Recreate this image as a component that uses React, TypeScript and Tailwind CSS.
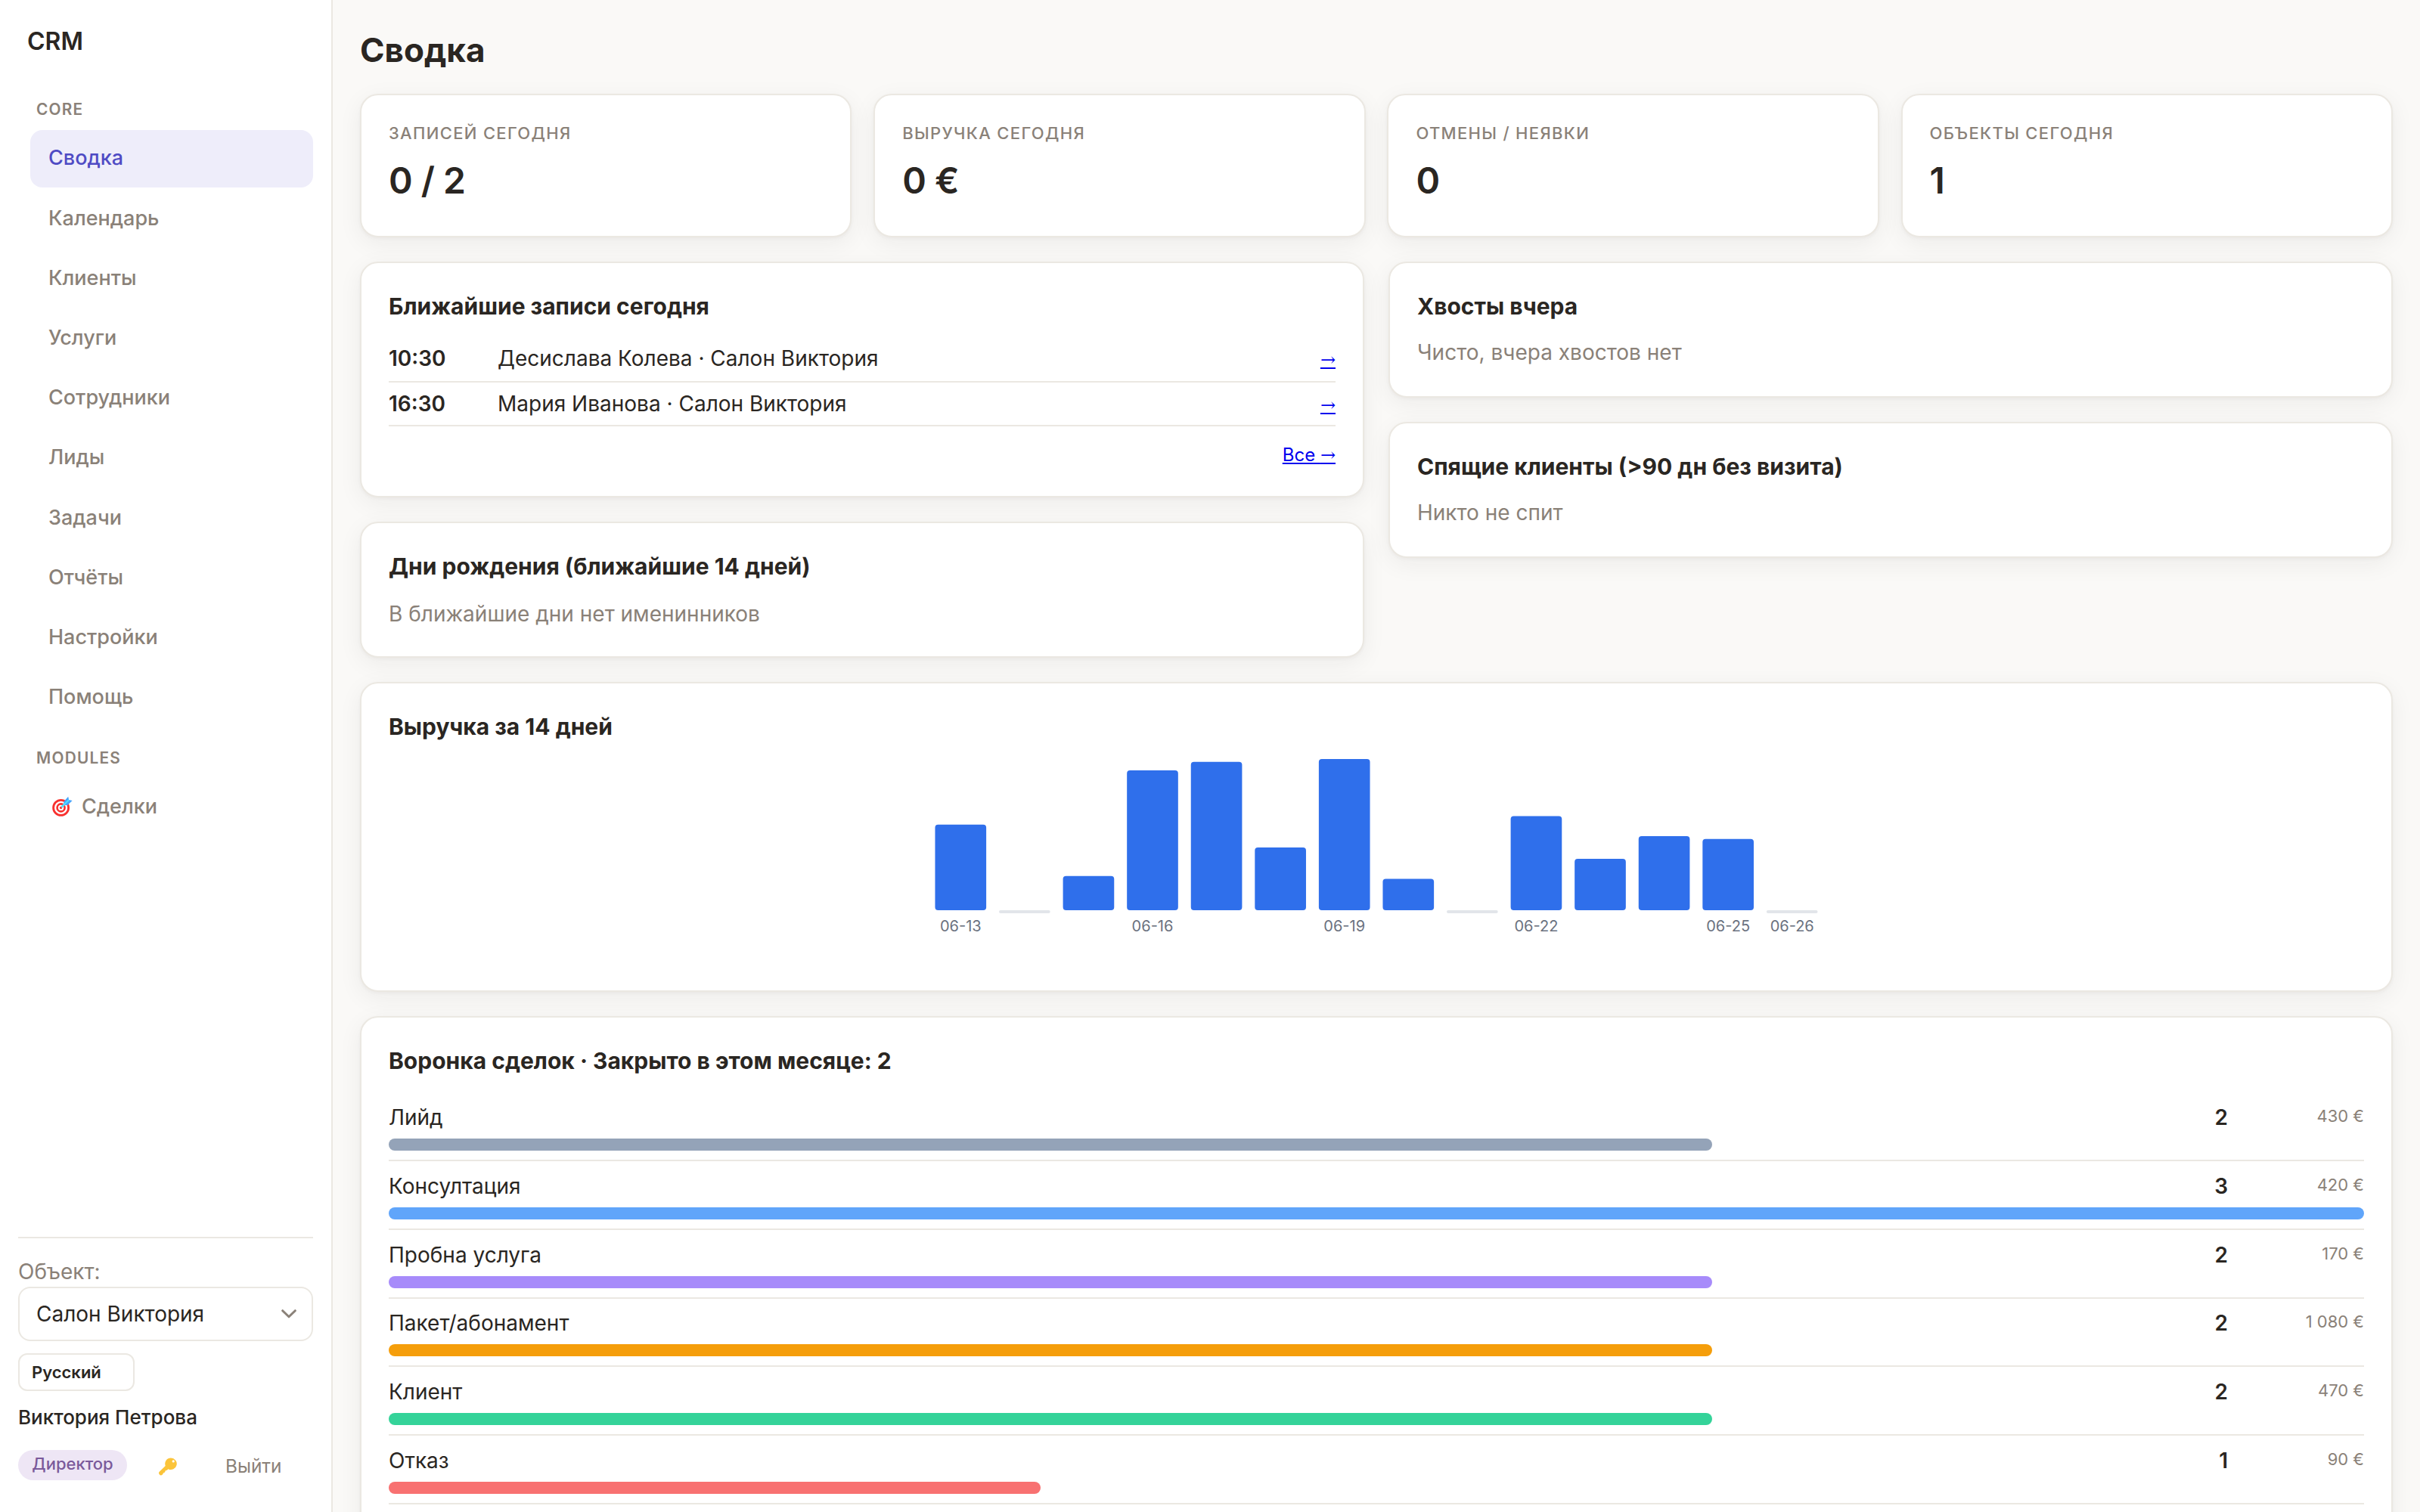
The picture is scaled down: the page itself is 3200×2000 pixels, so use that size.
import clsx from "clsx";
import type { ReactNode } from "react";

const NAV = [
  "Сводка",
  "Календарь",
  "Клиенты",
  "Услуги",
  "Сотрудники",
  "Лиды",
  "Задачи",
  "Отчёты",
  "Настройки",
  "Помощь",
];

const KPIS = [
  { label: "Записей сегодня", value: "0 / 2" },
  { label: "Выручка сегодня", value: "0 €" },
  { label: "Отмены / неявки", value: "0" },
  { label: "Объекты сегодня", value: "1" },
];

const UPCOMING = [
  { time: "10:30", text: "Десислава Колева · Салон Виктория" },
  { time: "16:30", text: "Мария Иванова · Салон Виктория" },
];

const REVENUE = [
  { day: "06-13", value: 300 },
  { day: "06-14", value: 0 },
  { day: "06-15", value: 120 },
  { day: "06-16", value: 490 },
  { day: "06-17", value: 520 },
  { day: "06-18", value: 220 },
  { day: "06-19", value: 530 },
  { day: "06-20", value: 110 },
  { day: "06-21", value: 0 },
  { day: "06-22", value: 330 },
  { day: "06-23", value: 180 },
  { day: "06-24", value: 260 },
  { day: "06-25", value: 250 },
  { day: "06-26", value: 0 },
];

const FUNNEL = [
  { name: "Лийд", count: 2, amount: "430 €", pct: 67, color: "bg-[#94a3b8]" },
  { name: "Консултация", count: 3, amount: "420 €", pct: 100, color: "bg-[#60a5fa]" },
  { name: "Пробна услуга", count: 2, amount: "170 €", pct: 67, color: "bg-[#a78bfa]" },
  { name: "Пакет/абонамент", count: 2, amount: "1 080 €", pct: 67, color: "bg-[#f59e0b]" },
  { name: "Клиент", count: 2, amount: "470 €", pct: 67, color: "bg-[#34d399]" },
  { name: "Отказ", count: 1, amount: "90 €", pct: 33, color: "bg-[#f87171]" },
];

function Card({ className, children }: { className?: string; children: ReactNode }) {
  return (
    <section
      className={clsx(
        "rounded-[24px] border-2 border-[#ebe8e2] bg-white px-9 shadow-[0_2px_4px_rgba(40,35,30,0.04),0_8px_32px_rgba(40,35,30,0.06)]",
        className
      )}
    >
      {children}
    </section>
  );
}

function CardTitle({ children }: { children: ReactNode }) {
  return <h2 className="text-[30px] leading-[40px] font-bold">{children}</h2>;
}

function TargetIcon() {
  return (
    <svg className="mt-[6px] mr-3 ml-[5px] shrink-0" width="27" height="27" viewBox="0 0 27 27" fill="none">
      <circle cx="11.6" cy="15.4" r="10" stroke="#f8312f" strokeWidth="2.8" />
      <circle cx="11.6" cy="15.4" r="5" stroke="#f8312f" strokeWidth="2.6" />
      <circle cx="11.6" cy="15.4" r="1.7" fill="#f8312f" />
      <path d="M13 14 20 7" stroke="#50e2ff" strokeWidth="2.6" strokeLinecap="round" />
      <path d="M15.4 12V7.2L21.2.8l.9 4.2 4.5.9-6.2 6.1z" fill="#46a4fb" />
      <path d="M15 12.2 22.1 5" stroke="#50e2ff" strokeWidth="1.8" />
    </svg>
  );
}

function KeyIcon() {
  return (
    <svg className="mt-[10px] ml-[42px] shrink-0" width="24" height="24" viewBox="0 0 24 24">
      <path
        d="M16 .4a7.8 7.8 0 0 0-7.3 10.5L.7 18.800a2.300 2.300 0 0 0-.4 2.700l.8 1.200c.4.5 1.200.8 2 .7 1.500-.2 2.300-.900 2.500-2.300.1-.7.600-1.100 1.300-1.200 1-.1 1.500-.7 1.500-1.600 0-.8.5-1.300 1.300-1.400.9 0 1.500-.4 1.900-1l.9-.700A7.8 7.8 0 1 0 16 .4z"
        fill="#fbc43a"
      />
      <circle cx="19.2" cy="4.900" r="1.6" fill="#fff" />
    </svg>
  );
}

function NavGroup({ title, className }: { title: string; className?: string }) {
  return (
    <div className={clsx("pl-6 text-[20.8px] leading-[31px] font-semibold tracking-[0.06em] text-[#8a8178] uppercase", className)}>
      {title}
    </div>
  );
}

function NavItem({ label, icon, active }: { label: string; icon?: ReactNode; active?: boolean }) {
  return (
    <a
      className={clsx(
        "ml-4 flex h-[76px] items-start rounded-[16px] px-6 pt-[17.4px] text-[27px] leading-[39px] font-medium",
        active ? "bg-[#eeedfa] text-[#4f4bc4]" : "text-[#8a8178]"
      )}
    >
      {icon}
      {label}
    </a>
  );
}

function Arrow() {
  return <span className="font-['DejaVu_Serif',serif]">→</span>;
}

function Sidebar() {
  return (
    <aside className="flex w-[440px] shrink-0 flex-col border-r-2 border-[#ebe8e2] bg-white px-6 pt-[35px] pb-[42px]">
      <div className="pl-3 text-[32px] leading-[40px] font-semibold">CRM</div>

      <NavGroup title="Core" className="mt-[54px]" />
      <nav className="mt-3 flex flex-col gap-[3.2px]">
        {NAV.map((label, i) => (
          <NavItem key={label} label={label} active={i === 0} />
        ))}
      </nav>

      <NavGroup title="Modules" className="mt-[26px]" />
      <nav className="mt-3">
        <NavItem label="Сделки" icon={<TargetIcon />} />
      </nav>

      <div className="mt-auto border-t-2 border-[#ebe8e2] pt-6">
        <div className="text-[28px] leading-[40px] text-[#8a8178]">Объект:</div>
        <button className="flex h-[72px] w-full items-center justify-between rounded-[16px] border-2 border-[#ebe8e2] pr-5 pl-[22px] text-[28px]">
          Салон Виктория
          <svg width="20" height="12" viewBox="0 0 20 12" fill="none" stroke="#8a8178" strokeWidth="3" strokeLinecap="round" strokeLinejoin="round">
            <path d="M1.7 1.7 10 9.8l8.3-8.1" />
          </svg>
        </button>
        <button className="mt-4 flex h-[50px] w-[154px] items-center rounded-[12px] border-2 border-[#ebe8e2] pl-4 text-[22px] font-semibold">
          Русский
        </button>
        <div className="mt-[15px] text-[26px] leading-[39px] font-medium">Виктория Петрова</div>
        <div className="mt-6 flex h-10 items-start">
          <span className="h-10 w-36 rounded-full bg-[#eee6f5] text-center text-[22px] leading-[37px] font-medium text-[#7b5a9b]">
            Директор
          </span>
          <KeyIcon />
          <span className="ml-16 pt-px text-[24.4px] leading-[40px] text-[#8a8178]">Выйти</span>
        </div>
      </div>
    </aside>
  );
}

// 600-unit wide chart, 100 units of bar height
function RevenueChart() {
  const max = Math.max(...REVENUE.map((d) => d.value));
  const step = 592 / REVENUE.length;

  return (
    <svg className="mx-auto mt-[3px] block h-[280px] w-[1200px]" viewBox="0 0 600 140">
      {REVENUE.map((d, i) => {
        const x = 4 + step * (i + 0.1);
        const h = (d.value / max) * 100;
        const showLabel = i % 3 === 0 || i === REVENUE.length - 1;
        return (
          <g key={d.day}>
            {d.value > 0 ? (
              <rect x={x} y={110 - h} width={step * 0.8} height={h} rx="2" fill="#2f6feb" />
            ) : (
              <rect x={x} y="110" width={step * 0.8} height="2" rx="1" fill="#e2e5ea" />
            )}
            {showLabel && (
              <text x={x + step * 0.4} y="124" textAnchor="middle" fontSize="10" fill="#6b7280">
                {d.day}
              </text>
            )}
          </g>
        );
      })}
    </svg>
  );
}

export default function App() {
  return (
    <div className="flex h-[2000px] w-[3200px] overflow-hidden bg-[#faf9f7] font-['Inter',sans-serif] text-[#2a2622]">
      <Sidebar />

      <main className="min-w-0 flex-1 px-9 pt-[39px]">
        <h1 className="mb-[31px] text-[44px] leading-[54px] font-bold">Сводка</h1>

        <div className="grid grid-cols-4 gap-[28.8px]">
          {KPIS.map((k) => (
            <Card key={k.label} className="h-[190px] pt-[34px]">
              <div className="text-[22px] leading-[33px] font-medium tracking-[0.06em] text-[#8a8178] uppercase">{k.label}</div>
              <div className="mt-4 text-[48px] leading-[59px] font-semibold tracking-[-0.01em]">{k.value}</div>
            </Card>
          ))}
        </div>

        <div className="mt-8 grid grid-cols-2 items-start gap-8">
          <div className="flex flex-col gap-8">
            <Card className="h-[312px] pt-[37px]">
              <CardTitle>Ближайшие записи сегодня</CardTitle>
              <div className="mt-[19px]">
                {UPCOMING.map((u) => (
                  <div
                    key={u.time}
                    className="flex items-baseline border-b-2 border-[#ebe8e2] py-1.5 text-[28px] leading-[44px] first:py-2"
                  >
                    <span className="w-36 font-semibold">{u.time}</span>
                    <span className="flex-1">{u.text}</span>
                    <a className="text-[24px] leading-[33px] text-[#0000ee] underline">
                      <Arrow />
                    </a>
                  </div>
                ))}
              </div>
              <div className="mt-[21px] text-right text-[24px] leading-[33px]">
                <a className="text-[#0000ee] underline">
                  Все <Arrow />
                </a>
              </div>
            </Card>

            <Card className="h-[180px] pt-[37px]">
              <CardTitle>Дни рождения (ближайшие 14 дней)</CardTitle>
              <p className="mt-[21px] text-[28px] leading-[44px] text-[#8a8178]">В ближайшие дни нет именинников</p>
            </Card>
          </div>

          <div className="flex flex-col gap-8">
            <Card className="h-[180px] pt-[37px]">
              <CardTitle>Хвосты вчера</CardTitle>
              <p className="mt-[19px] text-[28px] leading-[44px] text-[#8a8178]">Чисто, вчера хвостов нет</p>
            </Card>
            <Card className="h-[180px] pt-[37px]">
              <CardTitle>Спящие клиенты (&gt;90 дн без визита)</CardTitle>
              <p className="mt-[19px] text-[28px] leading-[44px] text-[#8a8178]">Никто не спит</p>
            </Card>
          </div>
        </div>

        <Card className="mt-8 h-[410px] pt-[37px]">
          <CardTitle>Выручка за 14 дней</CardTitle>
          <RevenueChart />
        </Card>

        <Card className="mt-8 h-[760px] pt-[37px]">
          <CardTitle>Воронка сделок · Закрыто в этом месяце: 2</CardTitle>
          <div className="mt-[22.2px]">
            {FUNNEL.map((f) => (
              <div key={f.name} className="border-b-2 border-[#ebe8e2] pt-[11.8px] pb-3">
                <div className="flex items-start text-[28px] leading-[42px]">
                  <span className="flex-1">{f.name}</span>
                  <span className="font-semibold">{f.count}</span>
                  <span className="w-[180px] pt-[3px] text-right text-[22px] leading-[33px] text-[#8a8178]">{f.amount}</span>
                </div>
                <div className={clsx("mt-[7px] h-4 rounded-full", f.color)} style={{ width: `${f.pct}%` }} />
              </div>
            ))}
          </div>
        </Card>
      </main>
    </div>
  );
}
